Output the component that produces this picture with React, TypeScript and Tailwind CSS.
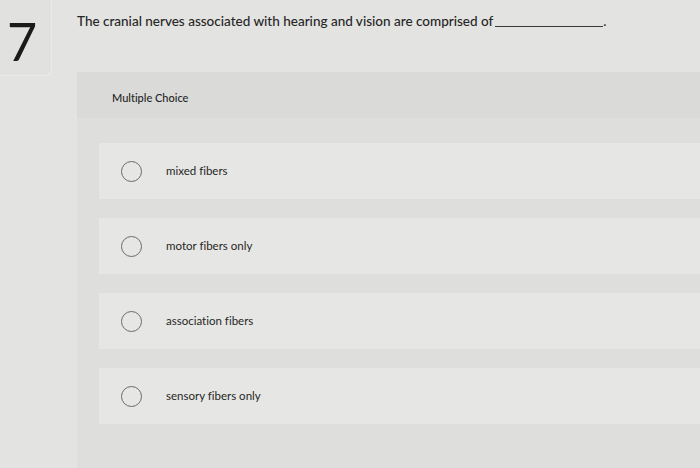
import React from 'react'

const options = ['mixed fibers', 'motor fibers only', 'association fibers', 'sensory fibers only']

const App = () => {
  return (
    <div
      className="w-[700px] h-[468px] overflow-hidden bg-[#e3e3e1] text-[#262626] flex [font-variant-ligatures:none]"
      style={{ fontFamily: 'Lato, "Noto Sans", sans-serif' }}
    >
      {/* Question number */}
      <div className="w-[77px] shrink-0">
        <div className="w-[52px] h-[76px] bg-[#e1e1df] border-r border-b border-[#ebebe9] rounded-br-md pl-[7px] pt-[15px]">
          <span className="text-[52px] leading-none font-normal text-[#1a1a1a]">7</span>
        </div>
      </div>

      <div className="flex-1 flex flex-col">
        {/* Question */}
        <div className="h-[72px] pt-[11px] text-[13.5px] font-medium flex items-start">
          <span>The cranial nerves associated with hearing and vision are comprised of</span>
          <span className="inline-block w-[108px] border-b border-[#3a3a3a] h-[16px] ml-[2px]" />
          <span>.</span>
        </div>

        {/* Multiple choice panel */}
        <div className="flex-1 bg-[#dededc] flex flex-col">
          <div className="h-[46px] bg-[#dadad8] pl-[35px] flex items-center text-[11px] font-medium pt-[6px]">
            Multiple Choice
          </div>
          <div className="flex flex-col gap-[19px] pt-[25px] pl-[22px]">
            {options.map((o) => (
              <div key={o} className="h-[56px] bg-[#e6e6e4] flex items-center pl-[22px]">
                <span className="w-[21px] h-[21px] rounded-full border border-[#6a6a6a] shrink-0" />
                <span className="ml-[24px] text-[11.5px]">{o}</span>
              </div>
            ))}
          </div>
        </div>
      </div>
    </div>
  )
}

export default App
